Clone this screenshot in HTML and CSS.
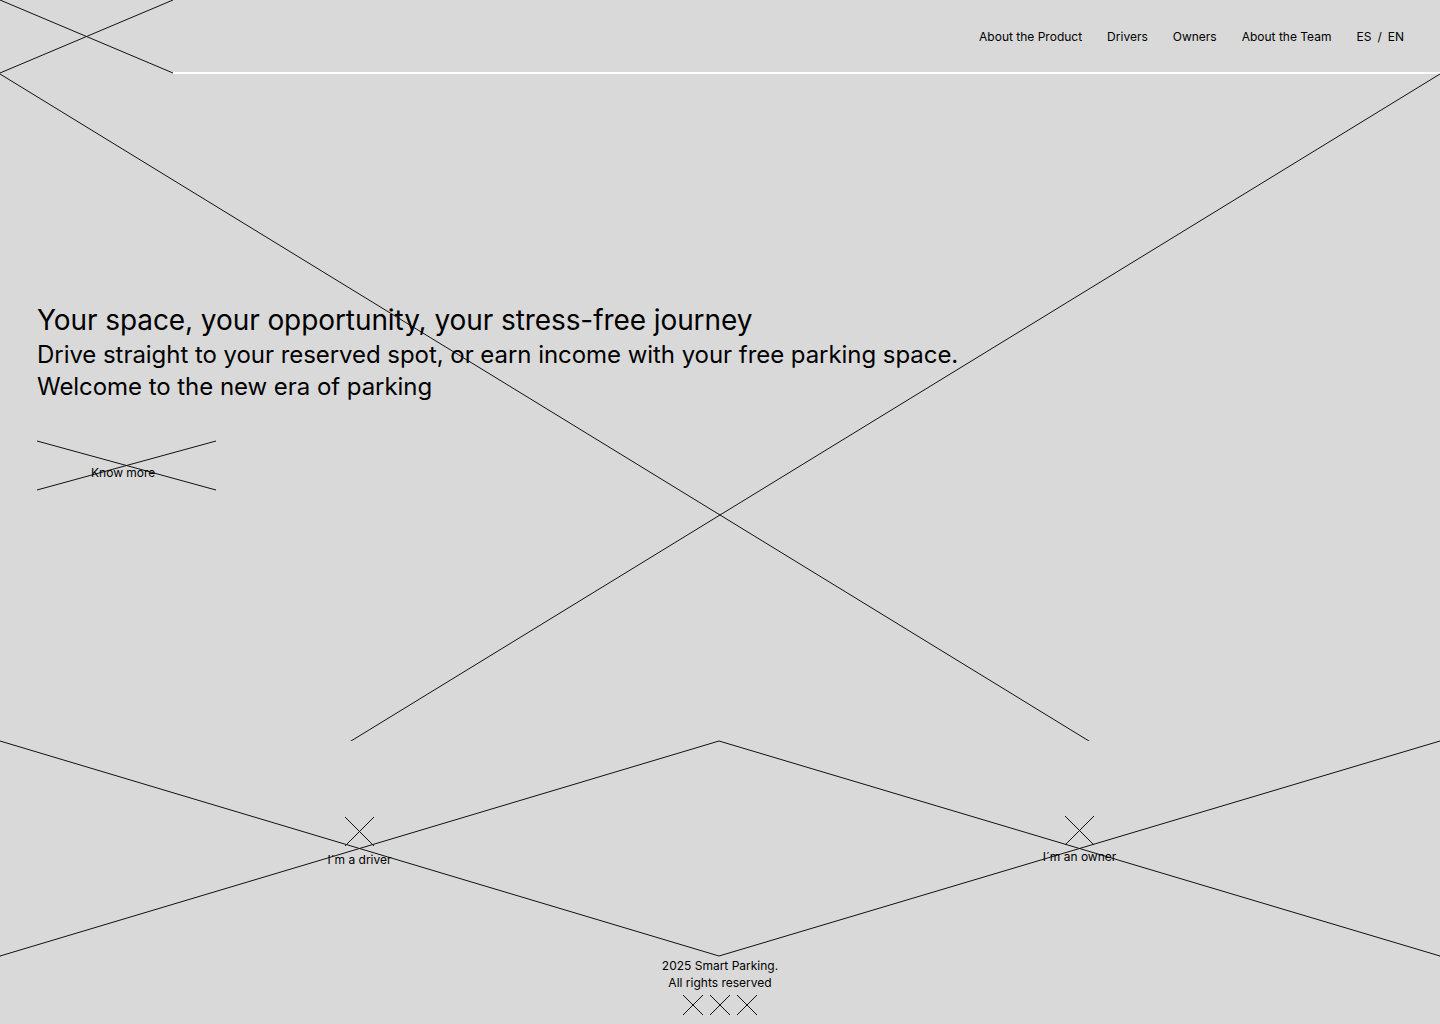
FILE: index.html
```html
<!DOCTYPE html>
<html lang="en">
<head>
<meta charset="utf-8">
<title>Smart Parking</title>
<link rel="stylesheet" href="styles.css">
</head>
<body>
<header class="topbar">
  <div class="logo">
    <svg class="ph" viewBox="0 0 173 74" preserveAspectRatio="none" aria-hidden="true">
      <line x1="0" y1="0" x2="173" y2="73"/>
      <line x1="0" y1="73" x2="173" y2="0"/>
    </svg>
  </div>
  <nav class="nav">
    <a href="#">About the Product</a>
    <a href="#">Drivers</a>
    <a href="#">Owners</a>
    <a href="#">About the Team</a>
    <span class="lang"><a href="#">ES</a><span class="sep">/</span><a href="#">EN</a></span>
  </nav>
</header>

<main class="hero">
  <svg class="hero-bg ph" viewBox="0 0 1440 882" preserveAspectRatio="none" aria-hidden="true">
    <line x1="0" y1="0" x2="1440" y2="882"/>
    <line x1="1440" y1="0" x2="0" y2="882"/>
  </svg>
  <div class="hero-copy">
    <h1 class="title">Your space, your opportunity, your stress-free journey</h1>
    <p class="lead">Drive straight to your reserved spot, or earn income with your free parking space.</p>
    <p class="lead">Welcome to the new era of parking</p>
    <a class="btn" href="#">
      <svg class="ph btn-bg" viewBox="0 0 179 49" preserveAspectRatio="none" aria-hidden="true">
        <line x1="0" y1="0" x2="179" y2="49"/>
        <line x1="0" y1="49" x2="179" y2="0"/>
      </svg>
      <span class="btn-label">Know more</span>
    </a>
  </div>

  <section class="choices">
    <a class="choice" href="#">
      <svg class="ph choice-bg" viewBox="0 0 720 215" preserveAspectRatio="none" aria-hidden="true">
        <line x1="0" y1="0" x2="720" y2="215"/>
        <line x1="0" y1="215" x2="720" y2="0"/>
      </svg>
      <svg class="ph icon" viewBox="0 0 29 29" aria-hidden="true">
        <line x1="0" y1="0" x2="29" y2="29"/>
        <line x1="0" y1="29" x2="29" y2="0"/>
      </svg>
      <span class="choice-label">I´m a driver</span>
    </a>
    <a class="choice choice--owner" href="#">
      <svg class="ph choice-bg" viewBox="0 0 720 215" preserveAspectRatio="none" aria-hidden="true">
        <line x1="0" y1="0" x2="720" y2="215"/>
        <line x1="0" y1="215" x2="720" y2="0"/>
      </svg>
      <svg class="ph icon" viewBox="0 0 29 29" aria-hidden="true">
        <line x1="0" y1="0" x2="29" y2="29"/>
        <line x1="0" y1="29" x2="29" y2="0"/>
      </svg>
      <span class="choice-label">I´m an owner</span>
    </a>
  </section>
</main>

<footer class="footer">
  <p class="copy">2025 Smart Parking.<br>All rights reserved</p>
  <div class="socials">
    <a href="#" class="social"><svg class="ph" viewBox="0 0 20 20"><line x1="0" y1="0" x2="20" y2="20"/><line x1="0" y1="20" x2="20" y2="0"/></svg></a>
    <a href="#" class="social"><svg class="ph" viewBox="0 0 20 20"><line x1="0" y1="0" x2="20" y2="20"/><line x1="0" y1="20" x2="20" y2="0"/></svg></a>
    <a href="#" class="social"><svg class="ph" viewBox="0 0 20 20"><line x1="0" y1="0" x2="20" y2="20"/><line x1="0" y1="20" x2="20" y2="0"/></svg></a>
  </div>
</footer>
</body>
</html>
```
FILE: styles.css
```css
* { box-sizing: border-box; }

html, body {
  margin: 0;
  padding: 0;
}

body {
  background: #d9d9d9;
  color: #000;
  font-family: Inter, "Noto Sans", "Liberation Sans", sans-serif;
  width: 1440px;
  height: 1024px;
  overflow: hidden;
}

a { color: inherit; text-decoration: none; }

.ph { display: block; overflow: visible; }
.ph line {
  stroke: #111;
  stroke-width: 1;
  vector-effect: non-scaling-stroke;
  fill: none;
}

/* header */
.topbar {
  display: flex;
  height: 74px;
}

.logo {
  width: 173px;
  height: 74px;
  flex: none;
}
.logo .ph { width: 173px; height: 74px; }

.nav {
  flex: 1;
  display: flex;
  justify-content: flex-end;
  align-items: center;
  gap: 25px;
  padding: 2px 36px 0 0;
  border-bottom: 2px solid #fff;
  font-size: 12px;
  line-height: 16px;
}

.lang { display: flex; align-items: center; }
.sep { margin: 0 6px; }

/* hero */
.hero {
  position: relative;
  height: 882px;
  display: flex;
  flex-direction: column;
}

.hero-bg {
  position: absolute;
  left: 0;
  top: 0;
  width: 1440px;
  height: 882px;
}

.hero-copy {
  position: relative;
  padding: 229px 0 0 37px;
}

.title {
  margin: 0;
  font-size: 28px;
  line-height: 34px;
  font-weight: 400;
  letter-spacing: -0.08px;
}

.lead {
  margin: 0;
  font-size: 24px;
  line-height: 32px;
  font-weight: 400;
  letter-spacing: -0.05px;
}
.title + .lead { margin-top: 2px; }

.btn {
  position: relative;
  display: block;
  width: 179px;
  height: 49px;
  margin-top: 38px;
  font-size: 12px;
  line-height: 16px;
}
.btn-bg {
  position: absolute;
  inset: 0;
  width: 179px;
  height: 49px;
}
.btn-label {
  position: relative;
  display: block;
  padding: 24px 0 0 54px;
}

/* choices */
.choices {
  position: relative;
  margin-top: auto;
  height: 215px;
  display: grid;
  grid-template-columns: 719px 721px;
  background: #d9d9d9;
}

.choice {
  position: relative;
  display: flex;
  flex-direction: column;
  align-items: center;
  padding-top: 76px;
  font-size: 12px;
  line-height: 16px;
}
.choice-bg {
  position: absolute;
  inset: 0;
  width: 100%;
  height: 100%;
}
.choice .icon {
  position: relative;
  width: 29px;
  height: 29px;
}
.choice-label {
  position: relative;
  margin-top: 6px;
}
.choice--owner { padding-top: 75px; }
.choice--owner .choice-label { margin-top: 4px; }

/* footer */
.footer {
  height: 68px;
  display: flex;
  flex-direction: column;
  align-items: center;
  padding-top: 1px;
}
.copy {
  margin: 0;
  font-size: 12px;
  line-height: 17px;
  text-align: center;
}
.socials {
  display: flex;
  gap: 7px;
  margin-top: 4px;
}
.social .ph { width: 20px; height: 20px; }
```
